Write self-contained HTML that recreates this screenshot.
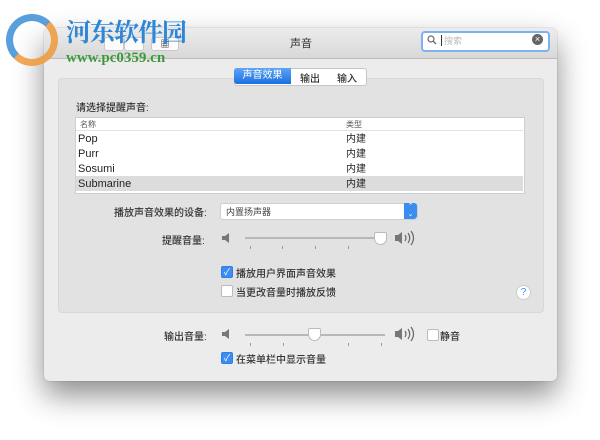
<!DOCTYPE html>
<html><head><meta charset="utf-8"><style>
body{margin:0;width:600px;height:440px;background:#fff;position:relative;overflow:hidden;font-family:"Liberation Sans","Noto Sans CJK SC",sans-serif;font-size:10px;color:#222}
.a{position:absolute}
.win{left:44px;top:28px;width:513px;height:353px;background:#ececec;border-radius:5px;box-shadow:0 14px 30px rgba(0,0,0,.45),0 0 1px rgba(0,0,0,.4)}
.tb{left:44px;top:28px;width:513px;height:30px;background:linear-gradient(#ececec,#d8d8d8);border-bottom:1px solid #bdbdbd;border-radius:5px 5px 0 0}
.btn{background:#fbfbfb;border:1px solid #c8c8c8;border-radius:3px;height:12px}
.cb{width:10px;height:10px;border-radius:2px;background:#fff;border:1px solid #bcbcbc}
.cb.on{background:#3b8ef0;border-color:#2f7ee0;color:#fff;font-size:9px;line-height:10px;text-align:center}
.tick{width:1px;height:3px;background:#999}
.lb{font-weight:500;color:#333}
</style></head><body>
<div class="a win"></div>
<div class="a tb"></div>
<div class="a btn" style="left:104px;top:37px;width:18px"></div>
<div class="a btn" style="left:124px;top:37px;width:18px"></div>
<div class="a btn" style="left:151px;top:37px;width:26px;text-align:center;font-size:9px;line-height:12px">▦</div>
<div class="a" style="left:290px;top:35px;font-size:11px;color:#333">声音</div>
<div class="a" style="left:421px;top:31px;width:125px;height:17px;background:#fff;border:2px solid #7fb0ef;border-radius:4px"></div>
<svg class="a" style="left:427px;top:35px" width="10" height="10"><circle cx="4" cy="4" r="3" fill="none" stroke="#666" stroke-width="1.2"/><line x1="6.3" y1="6.3" x2="9" y2="9" stroke="#666" stroke-width="1.3"/></svg>
<div class="a" style="left:441px;top:35px;width:1px;height:11px;background:#333"></div>
<div class="a" style="left:444px;top:34px;font-size:9px;color:#bbb">搜索</div>
<div class="a" style="left:532px;top:34px;width:11px;height:11px;border-radius:50%;background:#666;color:#fff;font-size:9px;line-height:11px;text-align:center">×</div>
<div class="a" style="left:58px;top:78px;width:484px;height:233px;background:#e2e2e2;border-radius:4px;border:1px solid #d8d8d8"></div>
<div class="a" style="left:234px;top:68px;width:131px;height:16px;background:#fff;border:1px solid #c6c6c6;border-radius:3px"></div>
<div class="a" style="left:234px;top:68px;width:57px;height:16px;background:linear-gradient(#5fa5f7,#1a6fe0);border-radius:3px 0 0 3px;color:#fff;font-size:10px;line-height:16px;text-align:center">声音效果</div>
<div class="a lb" style="left:300px;top:70px;font-size:10px">输出</div>
<div class="a lb" style="left:337px;top:70px;font-size:10px">输入</div>
<div class="a lb" style="left:76px;top:99px;font-size:10px">请选择提醒声音:</div>
<div class="a" style="left:75px;top:117px;width:448px;height:75px;background:#fff;border:1px solid #cfcfcf"></div>
<div class="a" style="left:76px;top:130px;width:447px;height:1px;background:#e3e3e3"></div>
<div class="a" style="left:76px;top:176px;width:447px;height:15px;background:#dcdcdc"></div>
<div class="a" style="left:80px;top:119px;font-size:8px;color:#555">名称</div>
<div class="a" style="left:346px;top:119px;font-size:8px;color:#555">类型</div>
<div class="a" style="left:78px;top:132px;font-size:11px;line-height:15px">Pop<br>Purr<br>Sosumi<br>Submarine</div>
<div class="a" style="left:346px;top:132px;font-size:10px;line-height:15px">内建<br>内建<br>内建<br>内建</div>
<div class="a lb" style="left:114px;top:204px;font-size:10px">播放声音效果的设备:</div>
<div class="a" style="left:220px;top:203px;width:196px;height:15px;background:#fff;border:1px solid #cfcfcf;border-radius:3px"></div>
<div class="a" style="left:226px;top:205px;font-size:9px;color:#444">内置扬声器</div>
<div class="a" style="left:404px;top:203px;width:13px;height:16px;background:#3b8ef0;border-radius:0 3px 3px 0;color:#fff;font-size:7px;line-height:8px;text-align:center">⌃<br>⌄</div>
<div class="a lb" style="left:162px;top:232px;font-size:10px">提醒音量:</div>
<svg class="a" style="left:221px;top:232px" width="12" height="12"><path d="M1 4h3l4-3v10l-4-3H1z" fill="#777"/></svg>
<div class="a" style="left:245px;top:237px;width:140px;height:2px;background:#b8b8b8"></div>
<div class="a" style="left:374px;top:232px;width:11px;height:11px;background:#fff;border:1px solid #bbb;border-radius:2px 2px 50% 50%"></div>
<div class="a tick" style="left:250px;top:246px"></div><div class="a tick" style="left:282px;top:246px"></div><div class="a tick" style="left:315px;top:246px"></div><div class="a tick" style="left:348px;top:246px"></div>
<svg class="a" style="left:394px;top:229px" width="26" height="18"><path d="M1 6h3l4-3v12l-4-3H1z" fill="#777"/><path d="M11 6q2 3 0 6M14 4q3.5 5 0 10M17 2q5 7 0 14" fill="none" stroke="#666" stroke-width="1.2"/></svg>
<div class="a cb on" style="left:221px;top:266px">✓</div>
<div class="a lb" style="left:236px;top:265px;font-size:10px">播放用户界面声音效果</div>
<div class="a cb" style="left:221px;top:285px"></div>
<div class="a lb" style="left:236px;top:284px;font-size:10px">当更改音量时播放反馈</div>
<div class="a" style="left:516px;top:285px;width:13px;height:13px;border-radius:50%;background:#fff;border:1px solid #ccc;color:#3b8ef0;font-size:10px;line-height:13px;text-align:center">?</div>
<div class="a lb" style="left:164px;top:328px;font-size:10px">输出音量:</div>
<svg class="a" style="left:221px;top:328px" width="12" height="12"><path d="M1 4h3l4-3v10l-4-3H1z" fill="#777"/></svg>
<div class="a" style="left:245px;top:334px;width:140px;height:2px;background:#b8b8b8"></div>
<div class="a" style="left:308px;top:328px;width:11px;height:11px;background:#fff;border:1px solid #bbb;border-radius:2px 2px 50% 50%"></div>
<div class="a tick" style="left:250px;top:343px"></div><div class="a tick" style="left:283px;top:343px"></div><div class="a tick" style="left:348px;top:343px"></div><div class="a tick" style="left:381px;top:343px"></div>
<svg class="a" style="left:394px;top:325px" width="26" height="18"><path d="M1 6h3l4-3v12l-4-3H1z" fill="#777"/><path d="M11 6q2 3 0 6M14 4q3.5 5 0 10M17 2q5 7 0 14" fill="none" stroke="#666" stroke-width="1.2"/></svg>
<div class="a cb" style="left:427px;top:329px"></div>
<div class="a lb" style="left:440px;top:328px;font-size:10px">静音</div>
<div class="a cb on" style="left:221px;top:352px">✓</div>
<div class="a lb" style="left:236px;top:351px;font-size:10px">在菜单栏中显示音量</div>
<!-- watermark -->
<div class="a" style="left:6px;top:14px;width:52px;height:52px;border-radius:50%;border:7px solid #3d8fd6;border-bottom-color:#f09a3a;border-right-color:#f09a3a;box-sizing:border-box;opacity:.85"></div>
<div class="a" style="left:66px;top:13px;font-size:25px;font-weight:bold;color:#2f86d4;font-family:'Noto Serif CJK SC',serif;letter-spacing:-1px">河东软件园</div>
<div class="a" style="left:66px;top:50px;font-size:15px;font-weight:bold;color:#3d9a3a;font-family:'Liberation Serif',serif">www.pc0359.cn</div>
</body></html>
